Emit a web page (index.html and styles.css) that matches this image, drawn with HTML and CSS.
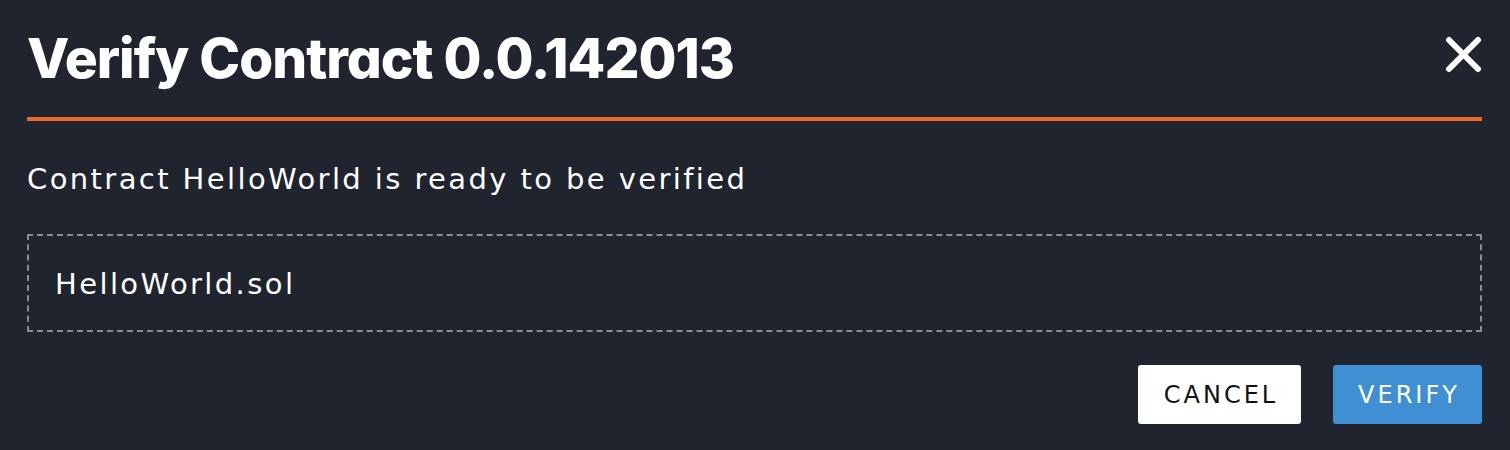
FILE: index.html
```html
<!DOCTYPE html>
<html lang="en">
<head>
<meta charset="utf-8">
<title>Verify Contract</title>
<link rel="stylesheet" href="styles.css">
</head>
<body>
<div class="dialog">
  <div class="header">
    <h1 class="title">Verify Contract 0.0.142013</h1>
    <button class="close" aria-label="Close">
      <svg width="37" height="37" viewBox="0 0 37 37"><path d="M4 4 L33 33 M33 4 L4 33" stroke="#fff" stroke-width="6" stroke-linecap="round" fill="none"/></svg>
    </button>
  </div>
  <p class="message">Contract HelloWorld is ready to be verified</p>
  <div class="filebox"><span class="filename">HelloWorld.sol</span></div>
  <div class="actions">
    <button class="btn btn-cancel">CANCEL</button>
    <button class="btn btn-verify">VERIFY</button>
  </div>
</div>
</body>
</html>
```
FILE: styles.css
```css
html, body {
  margin: 0;
  padding: 0;
  background: #20242f;
  height: 100%;
}
body {
  font-family: "DejaVu Sans", sans-serif;
  color: #ffffff;
}
.dialog {
  padding: 0 28px 0 27px;
}
.header {
  display: flex;
  justify-content: space-between;
  align-items: center;
  padding-top: 30px;
  padding-bottom: 31px;
  border-bottom: 4px solid #eb6a25;
}
.title {
  margin: 0;
  font-family: Inter, "Open Sans", sans-serif;
  font-feature-settings: "cv11";
  font-size: 55px;
  line-height: 56px;
  font-weight: 800;
  letter-spacing: -1px;
}
.close {
  background: none;
  border: 0;
  padding: 0;
  width: 37px;
  height: 37px;
  display: flex;
  margin-top: -8px;
}
.message {
  margin: 40px 0 0 0;
  font-size: 29px;
  line-height: 36px;
  font-weight: 400;
  letter-spacing: 2.4px;
}
.filebox {
  margin-top: 37px;
  box-sizing: border-box;
  height: 98px;
  border: 2px dashed #8a8c91;
  display: flex;
  align-items: center;
  padding: 2px 26px 0 26px;
}
.filename {
  font-size: 29px;
  line-height: 36px;
  letter-spacing: 2.4px;
}
.actions {
  margin-top: 33px;
  display: flex;
  justify-content: flex-end;
  gap: 32px;
}
.btn {
  height: 59px;
  border: 0;
  border-radius: 3px;
  font-family: "DejaVu Sans", sans-serif;
  font-size: 24px;
  letter-spacing: 3px;
  font-weight: 400;
  padding: 0 0 0 3px;
  cursor: pointer;
}
.btn-cancel {
  width: 163px;
  background: #ffffff;
  color: #111111;
}
.btn-verify {
  width: 149px;
  background: #3f8fd2;
  color: #ffffff;
}
```
